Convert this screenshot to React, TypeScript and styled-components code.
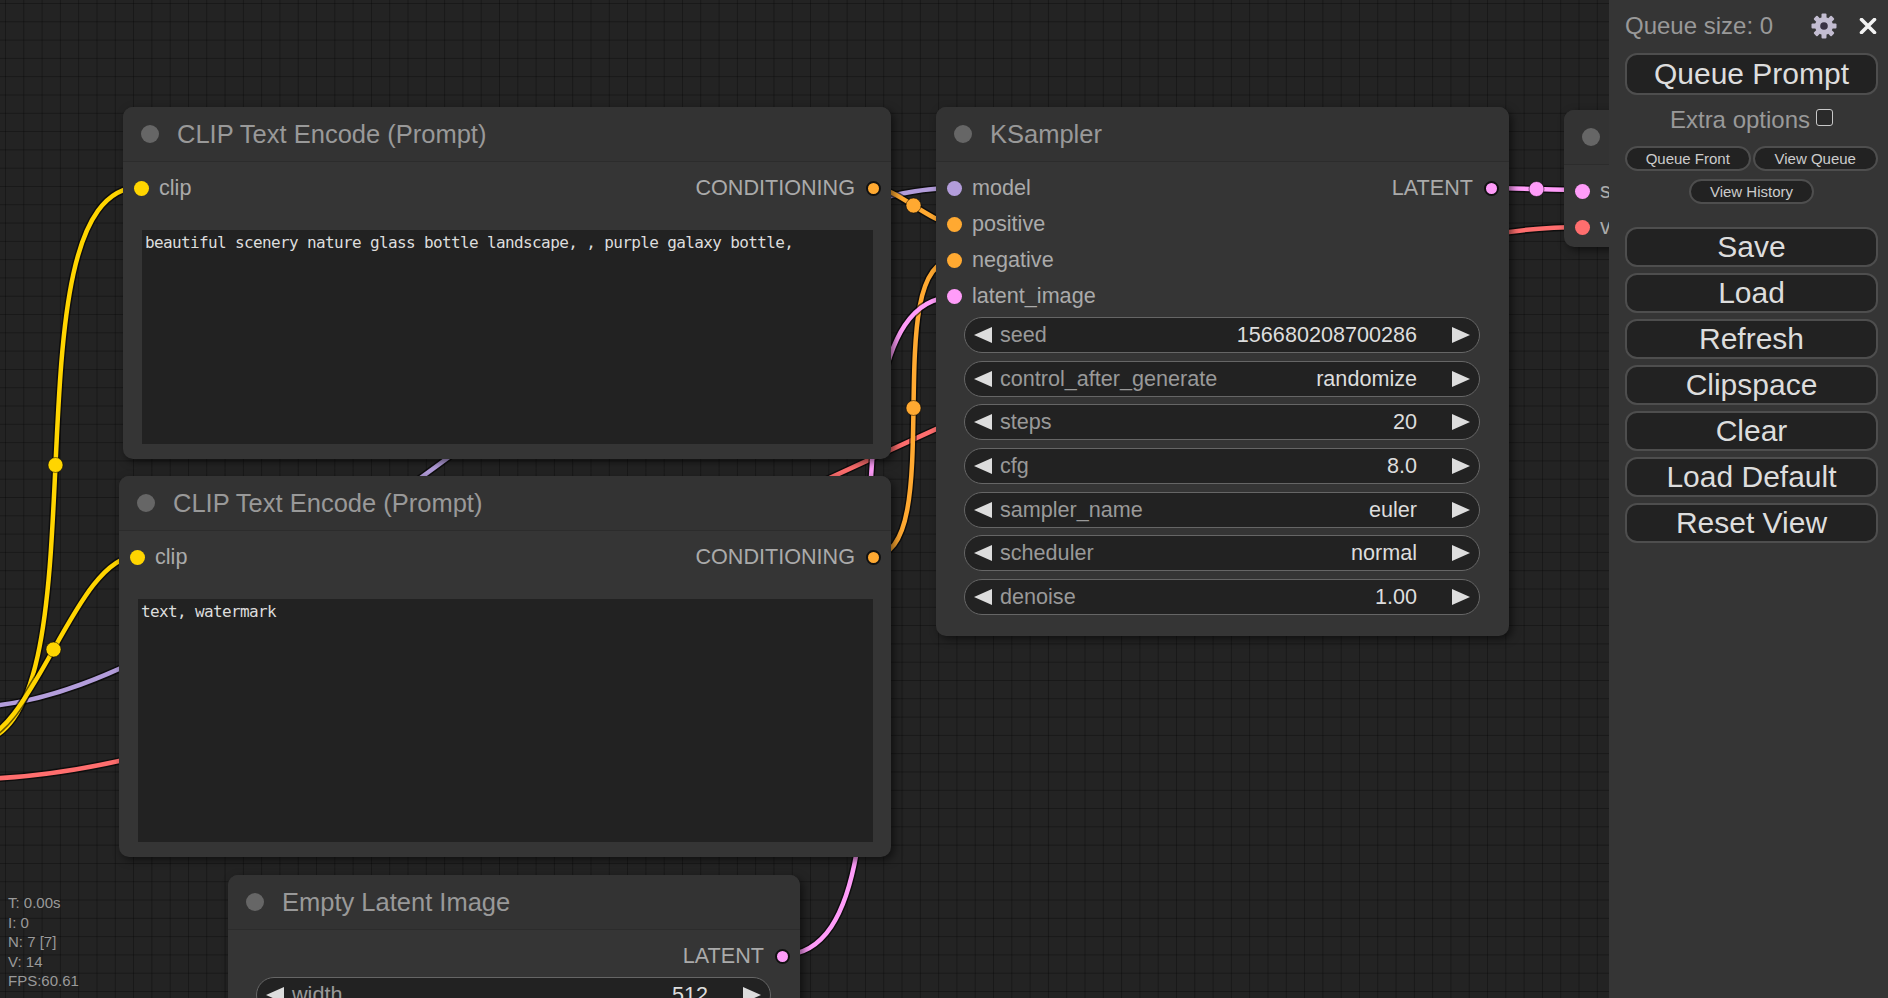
import React from "react";
import styled, { createGlobalStyle } from "styled-components";

const C = {
  clip: "#FFD500",
  cond: "#FFA931",
  model: "#B39DDB",
  latent: "#FF9CF9",
  vae: "#FF6E6E",
  image: "#64B5F6",
};

type Slot = { name: string; color: string };
type Widget = { name: string; value: string };
type NodeData = {
  id: string;
  x: number;
  y: number;
  w: number;
  h: number;
  title: string;
  inputs: Slot[];
  outputs: Slot[];
  widgets?: Widget[];
  text?: string;
};

const nodes: NodeData[] = [
  {
    id: "pos",
    x: 123,
    y: 107,
    w: 768,
    h: 352,
    title: "CLIP Text Encode (Prompt)",
    inputs: [{ name: "clip", color: C.clip }],
    outputs: [{ name: "CONDITIONING", color: C.cond }],
    text: "beautiful scenery nature glass bottle landscape, , purple galaxy bottle,",
  },
  {
    id: "neg",
    x: 119,
    y: 476,
    w: 772,
    h: 381,
    title: "CLIP Text Encode (Prompt)",
    inputs: [{ name: "clip", color: C.clip }],
    outputs: [{ name: "CONDITIONING", color: C.cond }],
    text: "text, watermark",
  },
  {
    id: "ks",
    x: 936,
    y: 107,
    w: 573,
    h: 529,
    title: "KSampler",
    inputs: [
      { name: "model", color: C.model },
      { name: "positive", color: C.cond },
      { name: "negative", color: C.cond },
      { name: "latent_image", color: C.latent },
    ],
    outputs: [{ name: "LATENT", color: C.latent }],
    widgets: [
      { name: "seed", value: "156680208700286" },
      { name: "control_after_generate", value: "randomize" },
      { name: "steps", value: "20" },
      { name: "cfg", value: "8.0" },
      { name: "sampler_name", value: "euler" },
      { name: "scheduler", value: "normal" },
      { name: "denoise", value: "1.00" },
    ],
  },
  {
    id: "latent",
    x: 228,
    y: 875,
    w: 572,
    h: 260,
    title: "Empty Latent Image",
    inputs: [],
    outputs: [{ name: "LATENT", color: C.latent }],
    widgets: [
      { name: "width", value: "512" },
      { name: "height", value: "512" },
      { name: "batch_size", value: "1" },
    ],
  },
  {
    id: "vae",
    x: 1564,
    y: 110,
    w: 300,
    h: 137,
    title: "VAE Decode",
    inputs: [
      { name: "samples", color: C.latent },
      { name: "vae", color: C.vae },
    ],
    outputs: [{ name: "IMAGE", color: C.image }],
  },
];

type Link = { from: [number, number]; to: [number, number]; color: string };

const links: Link[] = [
  { from: [-30, 707], to: [954, 188], color: C.model },
  { from: [-30, 779], to: [1582, 227], color: C.vae },
  { from: [-30, 743], to: [141, 187], color: C.clip },
  { from: [-30, 743], to: [137, 556], color: C.clip },
  { from: [873, 187], to: [954, 224], color: C.cond },
  { from: [873, 556], to: [954, 260], color: C.cond },
  { from: [782, 955], to: [954, 297], color: C.latent },
  { from: [1491, 188], to: [1582, 190], color: C.latent },
];

function linkPath(l: Link) {
  const [x0, y0] = l.from;
  const [x3, y3] = l.to;
  const d = Math.hypot(x3 - x0, y3 - y0) * 0.25;
  return `M ${x0} ${y0} C ${x0 + d} ${y0}, ${x3 - d} ${y3}, ${x3} ${y3}`;
}

const GlobalStyle = createGlobalStyle`
  html, body {
    margin: 0;
    padding: 0;
    width: 100%;
    height: 100%;
    overflow: hidden;
    background: #222;
  }
  #root {
    width: 100%;
    height: 100%;
  }
`;

const Page = styled.div`
  display: flex;
  width: 1888px;
  height: 998px;
  font-family: "Liberation Sans", Arial, sans-serif;
`;

const Canvas = styled.div`
  position: relative;
  flex: 1 1 auto;
  min-width: 0;
  overflow: hidden;
  background-color: #232323;
  background-image: linear-gradient(to right, rgba(0, 0, 0, 0.3) 1px, transparent 1px),
    linear-gradient(to bottom, rgba(0, 0, 0, 0.3) 1px, transparent 1px);
  background-size: 18.3px 18.3px;
  background-position: 5px 3px;
`;

const WireLayer = styled.svg`
  position: absolute;
  left: 0;
  top: 0;
  overflow: visible;
`;

const NodeBox = styled.div<{ $x: number; $y: number; $w: number; $h: number }>`
  position: absolute;
  left: ${(p) => p.$x}px;
  top: ${(p) => p.$y}px;
  width: ${(p) => p.$w}px;
  height: ${(p) => p.$h}px;
  background: #353535;
  border-radius: 10px;
  box-shadow: 3px 3px 8px rgba(0, 0, 0, 0.55);
  display: flex;
  flex-direction: column;
  overflow: hidden;
  box-sizing: border-box;
`;

const TitleBar = styled.div`
  height: 55px;
  flex: none;
  display: flex;
  align-items: center;
  gap: 18px;
  padding-left: 18px;
  background: #333;
  border-bottom: 1px solid #2c2c2c;
  box-sizing: border-box;
`;

const TitleDot = styled.span`
  width: 18px;
  height: 18px;
  border-radius: 50%;
  background: #666;
  flex: none;
`;

const TitleText = styled.span`
  font-size: 25.5px;
  color: #999;
  white-space: nowrap;
`;

const Body = styled.div`
  flex: 1;
  min-height: 0;
  display: flex;
  flex-direction: column;
  padding-top: 8px;
`;

const SlotRow = styled.div`
  height: 36px;
  flex: none;
  display: flex;
  align-items: center;
  justify-content: space-between;
  padding: 0 10.5px;
`;

const SlotSide = styled.div<{ $out?: boolean }>`
  display: flex;
  align-items: center;
  gap: 10.5px;
  flex-direction: ${(p) => (p.$out ? "row-reverse" : "row")};
`;

const SlotDot = styled.span<{ $color: string; $out?: boolean }>`
  width: 15px;
  height: 15px;
  border-radius: 50%;
  flex: none;
  box-sizing: border-box;
  background: ${(p) => p.$color};
  border: ${(p) => (p.$out ? "2px solid #111" : "none")};
`;

const SlotLabel = styled.span`
  font-size: 21.6px;
  color: #aaa;
  white-space: nowrap;
`;

const WidgetList = styled.div`
  display: flex;
  flex-direction: column;
  gap: 7.7px;
  padding: 3px 29px 0 28px;
`;

const WidgetPill = styled.div`
  height: 36px;
  box-sizing: border-box;
  border: 1px solid #666;
  border-radius: 18px;
  background: #222;
  display: flex;
  align-items: center;
  padding: 0 9px 0 9px;
  flex: none;
`;

const ArrowLeft = styled.span`
  width: 0;
  height: 0;
  flex: none;
  border-top: 8.5px solid transparent;
  border-bottom: 8.5px solid transparent;
  border-right: 18px solid #ddd;
`;

const ArrowRight = styled.span`
  width: 0;
  height: 0;
  flex: none;
  border-top: 8.5px solid transparent;
  border-bottom: 8.5px solid transparent;
  border-left: 18px solid #ddd;
`;

const WidgetLabel = styled.span`
  flex: 1;
  margin-left: 8px;
  font-size: 21.6px;
  color: #999;
  white-space: nowrap;
`;

const WidgetValue = styled.span`
  margin-right: 35px;
  font-size: 21.6px;
  color: #ddd;
  white-space: nowrap;
`;

const PromptText = styled.textarea`
  flex: 1;
  min-height: 0;
  margin: 24px 18px 15px 19px;
  padding: 3px 3px;
  box-sizing: border-box;
  background: #222;
  color: #ddd;
  border: none;
  outline: none;
  resize: none;
  overflow: hidden;
  font-family: "DejaVu Sans Mono", "Liberation Mono", monospace;
  font-size: 16px;
  letter-spacing: -0.63px;
  line-height: 20px;
`;

const Stats = styled.div`
  position: absolute;
  left: 8px;
  top: 893px;
  font-size: 15px;
  line-height: 19.5px;
  color: #9a9a9a;
  white-space: pre;
`;

/* ---------- sidebar ---------- */

const Sidebar = styled.aside`
  width: 279px;
  flex: none;
  box-sizing: border-box;
  padding: 0 10px 0 16px;
  background: #353535;
  display: flex;
  flex-direction: column;
  color: #999;
`;

const MenuHeader = styled.div`
  height: 52px;
  display: flex;
  align-items: center;
`;

const QueueSize = styled.span`
  flex: 1;
  font-size: 24px;
  color: #999;
`;

const IconSlot = styled.span<{ $gap: number }>`
  display: flex;
  align-items: center;
  margin-right: ${(p) => p.$gap}px;
`;

const BaseButton = styled.button`
  box-sizing: border-box;
  margin: 0;
  padding: 0;
  background: #222;
  color: #ddd;
  border: 2px solid #4e4e4e;
  font-family: "Liberation Sans", Arial, sans-serif;
  cursor: pointer;
`;

const MenuButton = styled(BaseButton)<{ $top: number; $h?: number }>`
  width: 100%;
  height: ${(p) => p.$h ?? 40}px;
  margin-top: ${(p) => p.$top}px;
  border-radius: 12px;
  font-size: 30px;
  line-height: 1;
`;

const ExtraRow = styled.div`
  margin-top: 7px;
  height: 36px;
  display: flex;
  align-items: center;
  justify-content: center;
  gap: 6px;
`;

const ExtraLabel = styled.span`
  font-size: 24px;
  color: #999;
`;

const CheckBox = styled.span`
  width: 17px;
  height: 17px;
  box-sizing: border-box;
  border: 1.5px solid #c8c8c8;
  border-radius: 3px;
  background: #2a2a2a;
  margin-top: -6px;
`;

const SmallRow = styled.div`
  margin-top: 8px;
  display: flex;
  gap: 2px;
`;

const SmallButton = styled(BaseButton)<{ $w?: number }>`
  height: 25px;
  flex: ${(p) => (p.$w ? "none" : "1")};
  width: ${(p) => (p.$w ? `${p.$w}px` : "auto")};
  border-radius: 13px;
  font-size: 15px;
  line-height: 1;
  color: #ccc;
`;

const CenterRow = styled.div`
  margin-top: 8px;
  display: flex;
  justify-content: center;
`;

function Gear() {
  const teeth = [0, 45, 90, 135, 180, 225, 270, 315];
  return (
    <svg width="26" height="26" viewBox="0 0 26 26">
      <g fill="#c3bdd1">
        {teeth.map((a) => (
          <rect key={a} x="10.5" y="0.5" width="5" height="6" rx="1" transform={`rotate(${a} 13 13)`} />
        ))}
        <circle cx="13" cy="13" r="9" />
      </g>
      <circle cx="13" cy="13" r="3.8" fill="#3a3344" />
    </svg>
  );
}

function CloseX() {
  return (
    <svg width="18" height="16" viewBox="0 0 18 16">
      <path d="M2.5 1.5 L15.5 14.5 M15.5 1.5 L2.5 14.5" stroke="#f2f2f2" strokeWidth="3.6" strokeLinecap="round" />
    </svg>
  );
}

function GraphNode({ n }: { n: NodeData }) {
  const rows = Math.max(n.inputs.length, n.outputs.length);
  return (
    <NodeBox $x={n.x} $y={n.y} $w={n.w} $h={n.h}>
      <TitleBar>
        <TitleDot />
        <TitleText>{n.title}</TitleText>
      </TitleBar>
      <Body>
        {Array.from({ length: rows }).map((_, i) => {
          const inp = n.inputs[i];
          const out = n.outputs[i];
          return (
            <SlotRow key={i}>
              <SlotSide>
                {inp && (
                  <>
                    <SlotDot $color={inp.color} />
                    <SlotLabel>{inp.name}</SlotLabel>
                  </>
                )}
              </SlotSide>
              <SlotSide $out>
                {out && (
                  <>
                    <SlotDot $color={out.color} $out />
                    <SlotLabel>{out.name}</SlotLabel>
                  </>
                )}
              </SlotSide>
            </SlotRow>
          );
        })}
        {n.widgets && (
          <WidgetList>
            {n.widgets.map((w) => (
              <WidgetPill key={w.name}>
                <ArrowLeft />
                <WidgetLabel>{w.name}</WidgetLabel>
                <WidgetValue>{w.value}</WidgetValue>
                <ArrowRight />
              </WidgetPill>
            ))}
          </WidgetList>
        )}
        {n.text !== undefined && <PromptText readOnly value={n.text} spellCheck={false} />}
      </Body>
    </NodeBox>
  );
}

export default function App() {
  return (
    <>
      <GlobalStyle />
      <Page>
        <Canvas>
          <WireLayer width="1609" height="998">
            {links.map((l, i) => {
              const d = linkPath(l);
              const mid = [(l.from[0] + l.to[0]) / 2, (l.from[1] + l.to[1]) / 2];
              return (
                <g key={i}>
                  <path d={d} fill="none" stroke="rgba(0,0,0,0.6)" strokeWidth={7.5} />
                  <path d={d} fill="none" stroke={l.color} strokeWidth={4.5} />
                  <circle cx={mid[0]} cy={mid[1]} r={7.5} fill={l.color} stroke="rgba(0,0,0,0.5)" strokeWidth={1} />
                </g>
              );
            })}
          </WireLayer>
          {nodes.map((n) => (
            <GraphNode key={n.id} n={n} />
          ))}
          <Stats>{"T: 0.00s\nI: 0\nN: 7 [7]\nV: 14\nFPS:60.61"}</Stats>
        </Canvas>
        <Sidebar>
          <MenuHeader>
            <QueueSize>Queue size: 0</QueueSize>
            <IconSlot $gap={22}>
              <Gear />
            </IconSlot>
            <IconSlot $gap={1}>
              <CloseX />
            </IconSlot>
          </MenuHeader>
          <MenuButton $top={1} $h={42}>Queue Prompt</MenuButton>
          <ExtraRow>
            <ExtraLabel>Extra options</ExtraLabel>
            <CheckBox />
          </ExtraRow>
          <SmallRow>
            <SmallButton>Queue Front</SmallButton>
            <SmallButton>View Queue</SmallButton>
          </SmallRow>
          <CenterRow>
            <SmallButton $w={125}>View History</SmallButton>
          </CenterRow>
          <MenuButton $top={23}>Save</MenuButton>
          <MenuButton $top={6}>Load</MenuButton>
          <MenuButton $top={6}>Refresh</MenuButton>
          <MenuButton $top={6}>Clipspace</MenuButton>
          <MenuButton $top={6}>Clear</MenuButton>
          <MenuButton $top={6}>Load Default</MenuButton>
          <MenuButton $top={6}>Reset View</MenuButton>
        </Sidebar>
      </Page>
    </>
  );
}
